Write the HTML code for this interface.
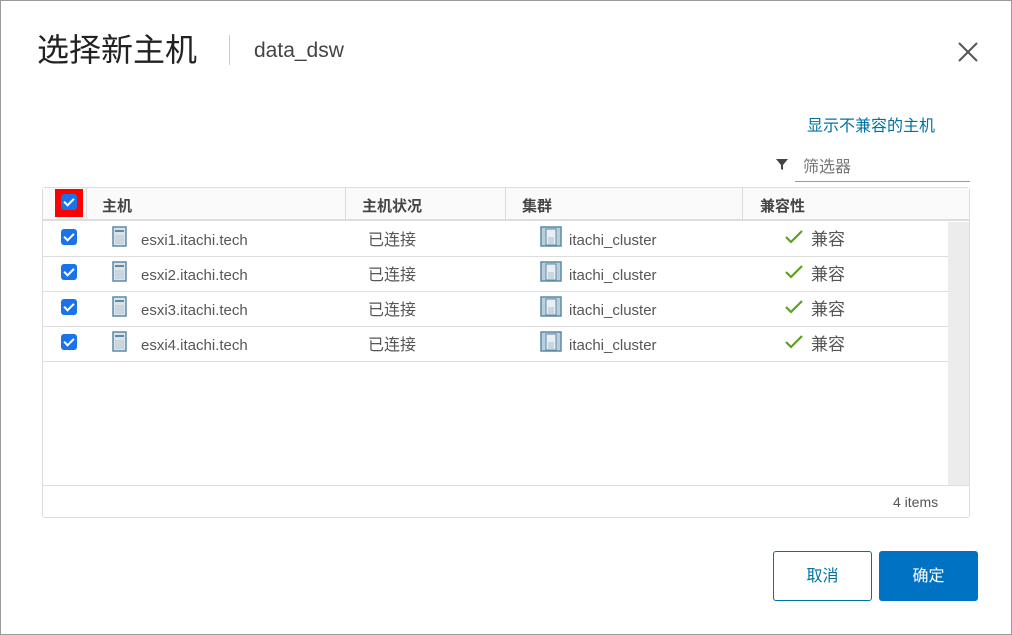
<!DOCTYPE html>
<html><head><meta charset="utf-8"><style>
*{margin:0;padding:0;box-sizing:border-box}
body{width:1012px;height:635px;background:#fff;font-family:"Liberation Sans","Noto Sans CJK SC",sans-serif;position:relative;overflow:hidden}
.a{position:absolute;line-height:1;white-space:nowrap}
.t{color:#565656;font-size:15px}
.cb{position:absolute;width:16px;height:16px;background:#1a73e8;border-radius:3px}
.cb:after{content:"";position:absolute;left:5px;top:2px;width:4px;height:8px;border:solid #fff;border-width:0 2px 2px 0;transform:rotate(45deg)}
.hdr{font-weight:bold;color:#454545;font-size:15px}
</style></head><body>
<div class="a" style="left:0;top:0;width:1012px;height:635px;border:1px solid #9a9a9a"></div>
<div class="a" style="left:37px;top:34px;font-size:32px;color:#222">选择新主机</div>
<div class="a" style="left:229px;top:35px;width:1px;height:30px;background:#ccc"></div>
<div class="a" style="left:254px;top:40px;font-size:21px;color:#444">data_dsw</div>
<svg class="a" style="left:958px;top:42px" width="20" height="20"><path d="M1 1L19 19M19 1L1 19" stroke="#555" stroke-width="2"/></svg>
<div class="a" style="left:807px;top:119px;font-size:16px;color:#0072a3">显示不兼容的主机</div>
<svg class="a" style="left:775px;top:157px" width="14" height="14"><path d="M1 2H13L8 8V13L6 12V8Z" fill="#444"/></svg>
<div class="a" style="left:803px;top:160px;font-size:16px;color:#777">筛选器</div>
<div class="a" style="left:795px;top:181px;width:175px;height:1px;background:#999"></div>
<div class="a" style="left:42px;top:187px;width:928px;height:331px;border:1px solid #ddd;border-radius:3px"></div>
<div class="a" style="left:43px;top:188px;width:926px;height:33px;background:#fafafa;border-bottom:2px solid #ddd"></div>
<div class="a" style="left:86px;top:188px;width:1px;height:33px;background:#ddd"></div>
<div class="a" style="left:345px;top:188px;width:1px;height:33px;background:#ddd"></div>
<div class="a" style="left:505px;top:188px;width:1px;height:33px;background:#ddd"></div>
<div class="a" style="left:742px;top:188px;width:1px;height:33px;background:#ddd"></div>
<div class="a" style="left:55px;top:189px;width:28px;height:28px;background:#f00"></div>
<div class="cb" style="left:61px;top:194px"></div>
<div class="a hdr" style="left:102px;top:199px">主机</div>
<div class="a hdr" style="left:362px;top:199px">主机状况</div>
<div class="a hdr" style="left:522px;top:199px">集群</div>
<div class="a hdr" style="left:760px;top:199px">兼容性</div>
<div class="a" style="left:948px;top:222px;width:21px;height:263px;background:#ececec"></div>
<div class="a" style="left:43px;top:485px;width:926px;height:1px;background:#ddd"></div>
<div class="a t" style="left:893px;top:495px;font-size:14px">4 items</div>
<div id="rows"></div>
<script>
var h='';for(var i=0;i<4;i++){var y=221+i*35;
h+='<div class="a" style="left:43px;top:'+(y+35)+'px;width:905px;height:1px;background:#ddd"></div>';
h+='<div class="cb" style="left:61px;top:'+(y+8)+'px"></div>';
h+='<svg class="a" style="left:112px;top:'+(y+5)+'px" width="16" height="22"><rect x="1" y="1" width="13" height="19" fill="#dbe3e8" stroke="#5d8aa8" stroke-width="1.5"/><rect x="3" y="4" width="9" height="2" fill="#5d8aa8"/><rect x="3" y="9" width="9" height="9" fill="#c9d6de"/></svg>';
h+='<div class="a t" style="left:141px;top:'+(y+12)+'px">esxi'+(i+1)+'.itachi.tech</div>';
h+='<div class="a t" style="left:368px;top:'+(y+12)+'px;font-size:16px">已连接</div>';
h+='<svg class="a" style="left:540px;top:'+(y+5)+'px" width="22" height="22"><rect x="1" y="1" width="20" height="19" fill="#b9d0dc" stroke="#5d8aa8" stroke-width="1.5"/><rect x="6" y="3" width="10" height="16" fill="#e8eef2" stroke="#5d8aa8"/><rect x="8" y="11" width="6" height="7" fill="#c9d6de"/></svg>';
h+='<div class="a t" style="left:569px;top:'+(y+12)+'px">itachi_cluster</div>';
h+='<svg class="a" style="left:784px;top:'+(y+8)+'px" width="20" height="16"><path d="M2 8L7 13L18 2" stroke="#5aa220" stroke-width="2.2" fill="none"/></svg>';
h+='<div class="a t" style="left:811px;top:'+(y+10)+'px;font-size:17px">兼容</div>';}
document.getElementById('rows').innerHTML=h;
</script>
<div class="a" style="left:773px;top:551px;width:99px;height:50px;border:1px solid #0072a3;border-radius:3px;color:#0072a3;font-size:16px;text-align:center;line-height:50px">取消</div>
<div class="a" style="left:879px;top:551px;width:99px;height:50px;background:#0072c3;border-radius:3px;color:#fff;font-size:16px;text-align:center;line-height:52px">确定</div>
</body></html>
